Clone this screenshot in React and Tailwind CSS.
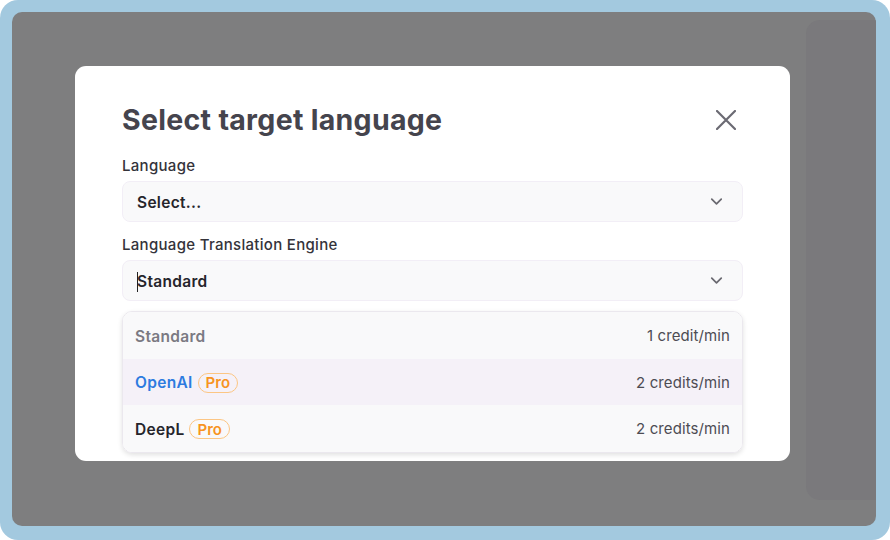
import { ChevronDown } from 'lucide-react';

const engines = [
  { name: 'Standard', price: '1 credit/min', pro: false, tone: 'text-[#7b7a82]', row: 'bg-[#f9f9fa]' },
  { name: 'OpenAI', price: '2 credits/min', pro: true, tone: 'text-[#2d7be0]', row: 'bg-[#f5f1f8]' },
  { name: 'DeepL', price: '2 credits/min', pro: true, tone: 'text-[#26252b]', row: 'bg-[#f9f9fa]' },
];

function ProBadge() {
  return (
    <span className="ml-[5px] inline-flex h-[20px] items-center rounded-full border border-[#fcc684] px-[7px] text-[15px] font-semibold leading-none text-[#f7941f]">
      Pro
    </span>
  );
}

function SelectBox({ children }) {
  return (
    <div className="flex h-[41px] items-center justify-between rounded-[8px] border border-[#f2eef6] bg-[#f9f9fa] pl-[14px] pr-[16px]">
      <div className="flex items-center pt-[2px] text-[15.5px] font-semibold tracking-[0.3px] text-[#26252b]">{children}</div>
      <ChevronDown size={19} strokeWidth={2.2} className="text-[#6a6970]" />
    </div>
  );
}

export default function App() {
  return (
    <div
      className="h-[540px] w-[890px] bg-white"
      style={{ fontFamily: 'Inter, "Noto Sans", sans-serif' }}
    >
      <div className="h-full w-full rounded-[18px] bg-[#a3c9df] pb-[14px] pl-[12px] pr-[14px] pt-[12px]">
        <div className="flex h-full w-full overflow-hidden rounded-[10px] bg-[#7e7e7f]">
          {/* main area with modal */}
          <div className="flex-1">
            <div className="ml-[63px] mt-[54px] w-[715px] rounded-[11px] bg-white pb-[8px] pl-[47px] pr-[47px] pt-[36px]">
              <div className="flex items-center justify-between">
                <h1 className="text-[28.5px] font-bold leading-[36px] tracking-[0.3px] text-[#45444d]">
                  Select target language
                </h1>
                <svg width="20" height="20" viewBox="0 0 20 20" className="mr-[7px] text-[#6b6a73]">
                  <path d="M1 1L19 19M19 1L1 19" stroke="currentColor" strokeWidth="2.2" strokeLinecap="round" />
                </svg>
              </div>

              <div className="mt-[17px] text-[15px] font-medium leading-[22px] tracking-[0.3px] text-[#34333a]">Language</div>
              <div className="mt-[4px]">
                <SelectBox>Select...</SelectBox>
              </div>

              <div className="mt-[12px] text-[15px] font-medium leading-[22px] tracking-[0.3px] text-[#34333a]">
                Language Translation Engine
              </div>
              <div className="mt-[4px]">
                <SelectBox>
                  <span className="mr-[-1px] h-[20px] w-px bg-[#222]" />
                  Standard
                </SelectBox>
              </div>

              <div className="mt-[10px] overflow-hidden rounded-[10px] border border-[#ebe8ee] shadow-[0_2px_5px_rgba(0,0,0,0.12)]">
                {engines.map((e) => (
                  <div
                    key={e.name}
                    className={`flex h-[46.5px] items-center justify-between pl-[12px] pr-[12px] pt-[2px] ${e.row}`}
                  >
                    <div className="flex items-center">
                      <span className={`text-[15.5px] font-semibold tracking-[0.3px] ${e.tone}`}>{e.name}</span>
                      {e.pro && <ProBadge />}
                    </div>
                    <span className="text-[15px] tracking-[0.1px] text-[#4d4c53]">{e.price}</span>
                  </div>
                ))}
              </div>
            </div>
          </div>

          {/* blurred side panel behind overlay */}
          <div className="w-[76px] pt-[8px]">
            <div className="ml-[6px] h-[480px] rounded-l-[14px] bg-[#7a797c]" />
          </div>
        </div>
      </div>
    </div>
  );
}
